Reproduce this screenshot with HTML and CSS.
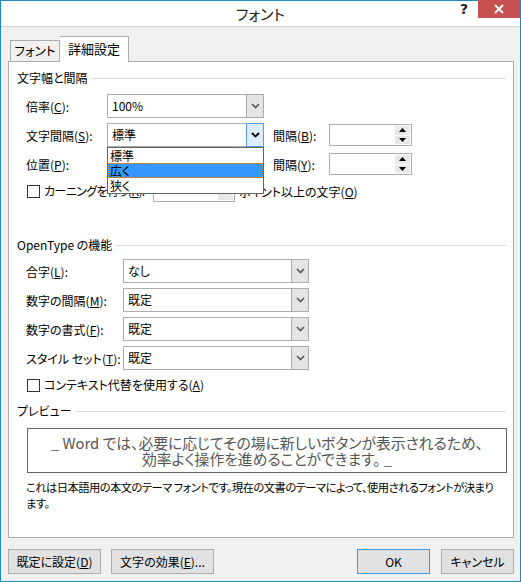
FILE: index.html
```html
<!DOCTYPE html>
<html lang="ja">
<head>
    <meta charset="UTF-8">
    <title>フォント</title>
    <link rel="stylesheet" href="styles.css">
</head>
<body>
    <div class="window">
        <!-- Title bar -->
        <header class="titlebar">
            <span></span>
            <h1 class="title">フォント</h1>
            <div class="controls">
                <span class="help">?</span>
                <span class="close">
                    <svg width="10" height="10" viewBox="0 0 10 10"><path d="M1 1 L9 9 M9 1 L1 9" stroke="#fff" stroke-width="1.8"/></svg>
                </span>
            </div>
        </header>

        <div class="dialog-body">
            <div class="tabs">
                <div class="tab">フォント</div>
                <div class="tab active">詳細設定</div>
            </div>

            <div class="panel">
                <!-- 文字幅と間隔 -->
                <div class="group-head"><span>文字幅と間隔</span></div>
                <div class="spacing-grid">
                    <label>倍率(<u>C</u>):</label>
                    <div class="combo">
                        <span class="combo-value">100%</span>
                        <span class="combo-btn"><svg width="9" height="6" viewBox="0 0 9 6"><path d="M1 1 L4.5 4.5 L8 1" fill="none" stroke="#5a5a5a" stroke-width="1.7"/></svg></span>
                    </div>
                    <span></span>
                    <span></span>

                    <label>文字間隔(<u>S</u>):</label>
                    <div class="combo open">
                        <span class="combo-value">標準</span>
                        <span class="combo-btn"><svg width="9" height="6" viewBox="0 0 9 6"><path d="M1 1 L4.5 4.5 L8 1" fill="none" stroke="#000" stroke-width="1.8"/></svg></span>
                        <ul class="dropdown">
                            <li>標準</li>
                            <li class="selected">広く</li>
                            <li>狭く</li>
                        </ul>
                    </div>
                    <label class="label2">間隔(<u>B</u>):</label>
                    <div class="spin">
                        <span class="spin-value"></span>
                        <span class="spin-btns">
                            <span class="spin-up"><svg width="7" height="4" viewBox="0 0 7 4"><path d="M0 4 L3.5 0 L7 4 Z" fill="#000"/></svg></span>
                            <span class="spin-down"><svg width="7" height="4" viewBox="0 0 7 4"><path d="M0 0 L3.5 4 L7 0 Z" fill="#000"/></svg></span>
                        </span>
                    </div>

                    <label>位置(<u>P</u>):</label>
                    <span></span>
                    <label class="label2">間隔(<u>Y</u>):</label>
                    <div class="spin">
                        <span class="spin-value"></span>
                        <span class="spin-btns">
                            <span class="spin-up"><svg width="7" height="4" viewBox="0 0 7 4"><path d="M0 4 L3.5 0 L7 4 Z" fill="#000"/></svg></span>
                            <span class="spin-down"><svg width="7" height="4" viewBox="0 0 7 4"><path d="M0 0 L3.5 4 L7 0 Z" fill="#000"/></svg></span>
                        </span>
                    </div>
                </div>

                <div class="kerning-row">
                    <span class="check-label kerning-label"><span class="checkbox"></span><span>カーニングを行う(<u>K</u>):</span></span>
                    <div class="combo small">
                        <span class="combo-value"></span>
                        <span class="combo-btn solid"><svg width="7" height="4" viewBox="0 0 7 4"><path d="M0 0 L3.5 4 L7 0 Z" fill="#000"/></svg></span>
                    </div>
                    <span class="kerning-after">ポイント以上の文字(<u>O</u>)</span>
                </div>

                <!-- OpenType の機能 -->
                <div class="group-head opentype"><span>OpenType の機能</span></div>
                <div class="opentype-grid">
                    <label>合字(<u>L</u>):</label>
                    <div class="combo">
                        <span class="combo-value">なし</span>
                        <span class="combo-btn"><svg width="9" height="6" viewBox="0 0 9 6"><path d="M1 1 L4.5 4.5 L8 1" fill="none" stroke="#5a5a5a" stroke-width="1.7"/></svg></span>
                    </div>
                    <label>数字の間隔(<u>M</u>):</label>
                    <div class="combo">
                        <span class="combo-value">既定</span>
                        <span class="combo-btn"><svg width="9" height="6" viewBox="0 0 9 6"><path d="M1 1 L4.5 4.5 L8 1" fill="none" stroke="#5a5a5a" stroke-width="1.7"/></svg></span>
                    </div>
                    <label>数字の書式(<u>F</u>):</label>
                    <div class="combo">
                        <span class="combo-value">既定</span>
                        <span class="combo-btn"><svg width="9" height="6" viewBox="0 0 9 6"><path d="M1 1 L4.5 4.5 L8 1" fill="none" stroke="#5a5a5a" stroke-width="1.7"/></svg></span>
                    </div>
                    <label>スタイル セット(<u>T</u>):</label>
                    <div class="combo">
                        <span class="combo-value">既定</span>
                        <span class="combo-btn"><svg width="9" height="6" viewBox="0 0 9 6"><path d="M1 1 L4.5 4.5 L8 1" fill="none" stroke="#5a5a5a" stroke-width="1.7"/></svg></span>
                    </div>
                </div>
                <div class="check-label contextual"><span class="checkbox"></span><span>コンテキスト代替を使用する(<u>A</u>)</span></div>

                <!-- プレビュー -->
                <div class="group-head preview-head"><span>プレビュー</span></div>
                <div class="preview-box">
                    <p>_ Word では、必要に応じてその場に新しいボタンが表示されるため、</p>
                    <p>効率よく操作を進めることができます。 _</p>
                </div>
                <p class="note">これは日本語用の本文のテーマ フォントです。現在の文書のテーマによって、使用されるフォントが決まります。</p>
            </div>

            <div class="button-row">
                <button class="btn btn-default">既定に設定(<u>D</u>)</button>
                <button class="btn btn-effects">文字の効果(<u>E</u>)...</button>
                <button class="btn btn-ok">OK</button>
                <button class="btn btn-cancel">キャンセル</button>
            </div>
        </div>
    </div>
</body>
</html>
```

FILE: styles.css
```css
* {
    margin: 0;
    padding: 0;
    box-sizing: border-box;
}

body {
    font-family: "Noto Sans CJK JP", "Noto Sans", sans-serif;
    font-size: 12px;
    font-feature-settings: "palt";
    color: #000;
    background: #f0f0f0;
}

u {
    text-decoration: underline;
    text-underline-offset: 1px;
}

.window {
    width: 521px;
    height: 582px;
    border: 1px solid #1d8bbd;
    background: #f0f0f0;
    display: flex;
    flex-direction: column;
}

/* Title bar */
.titlebar {
    height: 26px;
    background: #fff;
    border-bottom: 1px solid #d4d4d4;
    display: grid;
    grid-template-columns: 1fr auto 1fr;
}

.title {
    font-size: 15px;
    font-weight: 400;
    line-height: 26px;
    color: #222;
}

.controls {
    justify-self: end;
    display: flex;
    align-items: flex-start;
}

.help {
    font-family: "DejaVu Sans", sans-serif;
    font-size: 14px;
    font-weight: 700;
    line-height: 16px;
    color: #222;
    margin-right: 10px;
}

.close {
    width: 42px;
    height: 18px;
    margin-top: -1px;
    background: #c75050;
    display: flex;
    align-items: center;
    justify-content: center;
}

/* Dialog body */
.dialog-body {
    padding: 0 6px 0 7px;
}

.tabs {
    display: flex;
    align-items: flex-end;
    margin-top: 9px;
    padding-left: 2px;
    height: 25px;
}

.tab {
    width: 50px;
    height: 21px;
    border: 1px solid #acacac;
    border-bottom: none;
    background: #f0f0f0;
    font-size: 12.5px;
    line-height: 20px;
    text-align: center;
}

.tab.active {
    width: 69px;
    height: 26px;
    background: #fff;
    border-left: none;
    margin-bottom: -1px;
    position: relative;
    z-index: 1;
    font-size: 13px;
    line-height: 24px;
}

.panel {
    height: 477px;
    background: #fff;
    border: 1px solid #acacac;
    padding: 0 7px 0 8px;
}

.group-head {
    display: flex;
    align-items: center;
    line-height: 16px;
    margin-top: 8px;
}

.group-head::after {
    content: "";
    flex: 1;
    height: 1px;
    background: #dcdcdc;
    margin-left: 3px;
}

.group-head.opentype {
    margin-top: 35px;
}

.group-head.preview-head {
    margin-top: 10px;
}

/* Grids */
.spacing-grid {
    display: grid;
    grid-template-columns: 81px 157px 65px 83px;
    grid-auto-rows: 24px;
    row-gap: 5px;
    align-items: center;
    margin-top: 8px;
    padding-left: 9px;
}

.label2 {
    padding-left: 9px;
}

.opentype-grid {
    display: grid;
    grid-template-columns: 97px 186px;
    grid-auto-rows: 24px;
    row-gap: 5px;
    align-items: center;
    margin-top: 6px;
    padding-left: 9px;
}

/* Combo box */
.combo {
    height: 24px;
    display: flex;
    border: 1px solid #acacac;
    background: #fff;
    position: relative;
}

.combo-value {
    flex: 1;
    padding-left: 4px;
    line-height: 22px;
}

.combo-btn {
    width: 17px;
    background: #e5e5e5;
    border-left: 1px solid #acacac;
    display: flex;
    align-items: center;
    justify-content: center;
}

.combo.open .combo-btn {
    background: #dcecfc;
    border: 1px solid #569de5;
    margin: -1px -1px -1px 0;
    width: 18px;
}

.dropdown {
    list-style: none;
    position: absolute;
    top: 23px;
    left: -1px;
    width: 157px;
    background: #fff;
    border: 1px solid #646464;
    z-index: 2;
}

.dropdown li {
    height: 15px;
    line-height: 15px;
    padding-left: 2px;
}

.dropdown li.selected {
    background: #3399ff;
    outline: 1px dotted #d08a3a;
    outline-offset: -1px;
}

/* Spin box */
.spin {
    height: 22px;
    display: flex;
    border: 1px solid #acacac;
    background: #fff;
}

.spin-value {
    flex: 1;
}

.spin-btns {
    width: 16px;
    display: flex;
    flex-direction: column;
    padding: 1px 1px 1px 0;
}

.spin-up,
.spin-down {
    flex: 1;
    background: #e8e8e8;
    display: flex;
    align-items: center;
    justify-content: center;
}

.spin-up {
    border-bottom: 1px solid #fff;
}

/* Checkbox rows */
.check-label {
    display: flex;
    align-items: center;
    gap: 4px;
    line-height: 16px;
    white-space: nowrap;
}

.checkbox {
    width: 13px;
    height: 13px;
    border: 1px solid #333;
    background: #fff;
    flex-shrink: 0;
}

.kerning-row {
    display: flex;
    align-items: center;
    height: 22px;
    margin-top: 4px;
    padding-left: 10px;
}

.kerning-label {
    width: 126px;
    flex-shrink: 0;
    letter-spacing: -0.6px;
    overflow: hidden;
}

.combo.small {
    width: 82px;
    height: 21px;
    flex-shrink: 0;
}

.combo-btn.solid {
    width: 15px;
    background: #e8e8e8;
    border: none;
    margin: 2px 1px 1px 0;
}

.kerning-after {
    margin-left: 4px;
    white-space: nowrap;
}

.contextual {
    margin-top: 7px;
    padding-left: 10px;
}

/* Preview */
.preview-box {
    margin: 9px 0 0 10px;
    width: 480px;
    height: 45px;
    border: 1px solid #646464;
    color: #555;
    font-size: 14.8px;
    line-height: 16px;
    text-align: center;
    padding-top: 6px;
    white-space: nowrap;
}

.note {
    margin-top: 6px;
    padding-left: 9px;
    line-height: 16px;
    width: 482px;
    font-size: 11.3px;
    letter-spacing: -0.55px;
}

/* Buttons */
.button-row {
    display: flex;
    gap: 10px;
    margin-top: 11px;
}

.btn {
    height: 25px;
    font-family: inherit;
    font-size: 12px;
    font-feature-settings: "palt";
    background: #e1e1e1;
    border: 1px solid #adadad;
    color: #000;
}

.btn-default {
    width: 93px;
}

.btn-effects {
    width: 103px;
}

.btn-ok {
    width: 73px;
    margin-left: auto;
    border-color: #3c9be6;
}

.btn-cancel {
    width: 73px;
    margin-left: 1px;
}
```
